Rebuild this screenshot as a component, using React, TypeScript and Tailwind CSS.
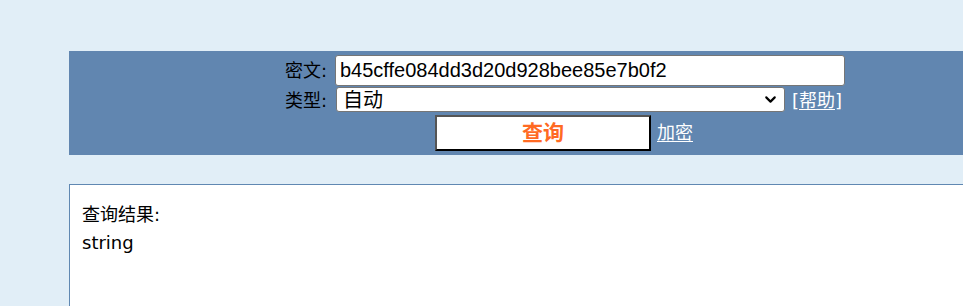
import { ChevronDown } from "lucide-react";

const cjk = { fontFamily: '"DejaVu Sans", "Noto Sans CJK SC", sans-serif' };

export default function App() {
  return (
    <div
      className="h-[306px] w-[963px] overflow-hidden bg-[#e1eef7] pt-[51px] pl-[69px] text-black"
      style={cjk}
    >
      <div className="w-[988px] h-[104px] bg-[#6186b0] pt-[4px]">
        <div className="flex items-center h-[31px]">
          <label className="w-[266px] pr-[8px] text-right text-[18px] leading-none">
            密文:
          </label>
          <input
            className="w-[510px] h-[31px] rounded-[3px] border border-[#767676] bg-white px-[4px] text-[20px] outline-none"
            style={{ fontFamily: '"Liberation Sans", Arial, sans-serif' }}
            defaultValue="b45cffe084dd3d20d928bee85e7b0f2"
          />
        </div>

        <div className="flex items-center h-[25px] mt-[2px]">
          <label className="w-[267px] pr-[9px] text-right text-[18px] leading-none">
            类型:
          </label>
          <div className="relative">
            <select className="w-[449px] h-[25px] appearance-none rounded-[3px] border border-[#767676] bg-white pl-[6px] text-[20px] leading-none">
              <option>自动</option>
            </select>
            <ChevronDown
              className="pointer-events-none absolute right-[6px] top-[4px] w-[17px] h-[17px]"
              strokeWidth={3}
            />
          </div>
          <a className="ml-[7px] text-[18px] leading-none text-white underline underline-offset-2">
            [帮助]
          </a>
        </div>

        <div className="flex items-center h-[36px] mt-[2px]">
          <button className="ml-[366px] w-[216px] h-[36px] bg-white border-2 border-t-[#555] border-l-[#555] border-b-black border-r-black text-[21px] font-bold text-[#ff6a23] leading-none">
            查询
          </button>
          <a className="ml-[6px] text-[18px] leading-none text-white underline underline-offset-2">
            加密
          </a>
        </div>
      </div>

      <div className="mt-[29px] w-[988px] h-[200px] border border-[#6088b2] bg-white px-[12px] pt-[16px] text-[18px] leading-[28px]">
        <div>查询结果:</div>
        <div>string</div>
      </div>
    </div>
  );
}
